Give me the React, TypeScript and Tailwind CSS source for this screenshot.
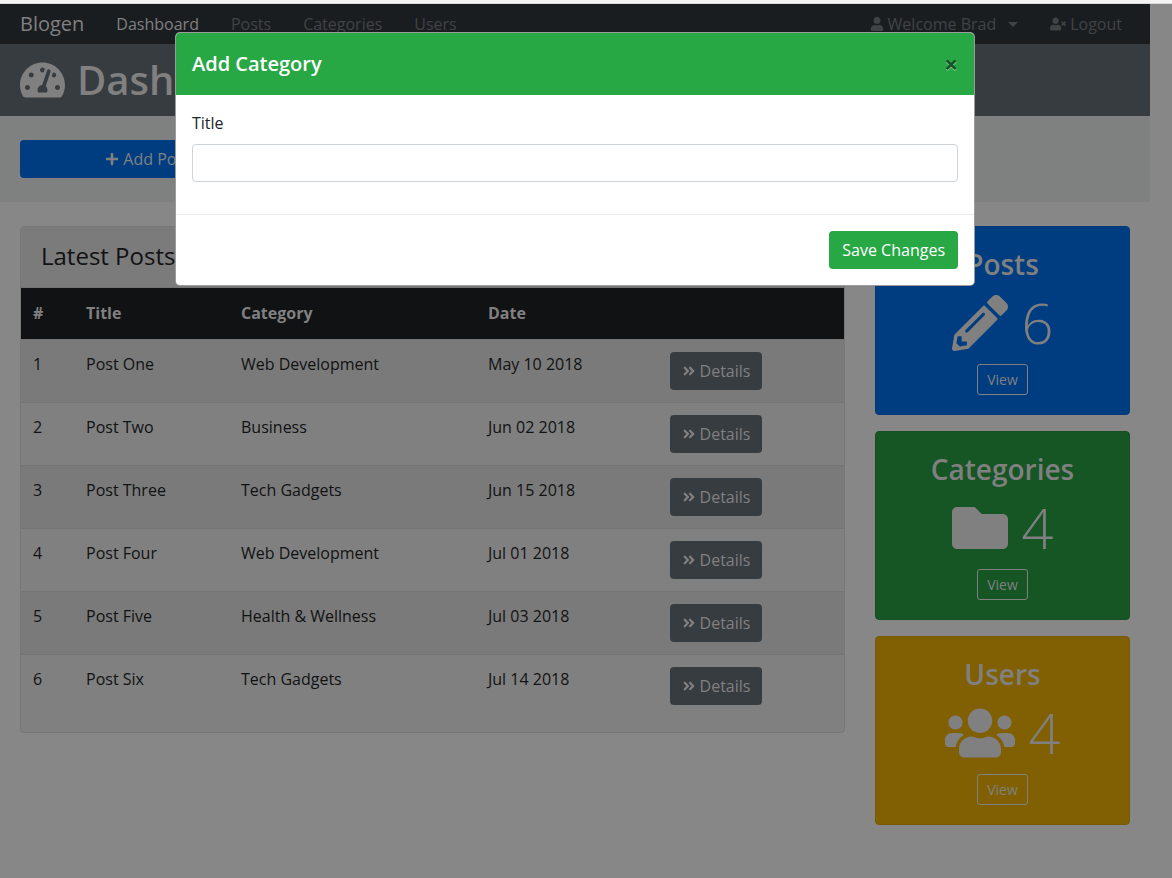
import { FaTachometerAlt, FaUser, FaUserTimes, FaPlus, FaPencilAlt, FaFolder, FaUsers, FaAngleDoubleRight } from "react-icons/fa";

const posts = [
  ["1", "Post One", "Web Development", "May 10 2018"],
  ["2", "Post Two", "Business", "Jun 02 2018"],
  ["3", "Post Three", "Tech Gadgets", "Jun 15 2018"],
  ["4", "Post Four", "Web Development", "Jul 01 2018"],
  ["5", "Post Five", "Health & Wellness", "Jul 03 2018"],
  ["6", "Post Six", "Tech Gadgets", "Jul 14 2018"],
];

function StatCard({ title, count, bg, border, children }: { title: string; count: string; bg: string; border: string; children: React.ReactNode }) {
  return (
    <div className={`h-[189px] rounded-[4px] border ${bg} ${border} p-5 text-center text-[#808080]`}>
      <h3 className="mb-2 text-[28px] leading-[34px] font-semibold">{title}</h3>
      <div className="mb-2 flex h-[67px] items-center justify-center gap-[14px] text-[56px] leading-[67px] font-light">
        {children}
        <span>{count}</span>
      </div>
      <a className="inline-block h-[31px] rounded-[3px] border border-[#808080] px-[9px] text-sm leading-[29px]">View</a>
    </div>
  );
}

export default function App() {
  return (
    <div className="relative min-h-[878px] overflow-hidden bg-[#878787] font-['Open_Sans','Liberation_Sans',sans-serif] text-base text-[#111213]">
      <div className="h-1 border-b border-[#d8d8d8] bg-[#f4f4f4]" />

      <div className="w-[1150px]">
        <nav className="flex h-10 items-center bg-[#1a1d20] px-5 text-[#808080]">
          <span className="mr-4 text-xl">Blogen</span>
          <a className="px-4 text-[#808080]">Dashboard</a>
          <a className="px-4 text-[#404346]">Posts</a>
          <a className="px-4 text-[#404346]">Categories</a>
          <a className="px-4 text-[#404346]">Users</a>
          <div className="ml-auto flex items-center text-[#404346]">
            <a className="flex items-center gap-1 px-2">
              <FaUser className="size-[14px]" />
              Welcome Brad
              <span className="ml-2 border-x-[5px] border-t-[5px] border-x-transparent border-t-[#404346]" />
            </a>
            <a className="ml-4 flex items-center gap-1 px-2">
              <FaUserTimes className="size-4" />
              Logout
            </a>
          </div>
        </nav>

        <header className="flex h-[72px] items-center gap-3 bg-[#373c40] px-5 text-[#808080]">
          <FaTachometerAlt className="h-10 w-[45px]" />
          <h1 className="text-[40px] leading-[48px] font-semibold">Dashboard</h1>
        </header>

        <section className="grid h-[86px] grid-cols-3 items-center gap-[30px] bg-[#7f8180] px-5">
          <a className="flex h-[38px] w-[255px] items-center justify-center gap-1 rounded-[4px] bg-[#003d80] text-[#808080]">
            <FaPlus className="size-[14px]" /> Add Post
          </a>
        </section>

        <main className="flex items-start gap-[30px] px-5 pt-6">
          <div className="h-[507px] w-[825px] rounded-[4px] border border-[#777777] bg-[#808080]">
            <div className="h-[61px] border-b border-[#747474] bg-[#7b7b7b] px-5 pt-[12px]">
              <h4 className="text-2xl leading-[33px] font-medium">Latest Posts</h4>
            </div>
            <table className="w-full table-fixed border-collapse text-left">
              <colgroup>
                <col className="w-[53px]" />
                <col className="w-[155px]" />
                <col className="w-[247px]" />
                <col className="w-[182px]" />
                <col />
              </colgroup>
              <thead className="bg-[#101214] text-[#808080]">
                <tr className="h-[51px]">
                  <th className="px-3 font-bold">#</th>
                  <th className="px-3 font-bold">Title</th>
                  <th className="px-3 font-bold">Category</th>
                  <th className="px-3 font-bold">Date</th>
                  <th />
                </tr>
              </thead>
              <tbody>
                {posts.map((p, i) => (
                  <tr key={p[0]} className={`h-[63px] border-t border-[#747474] align-top ${i % 2 === 0 ? "bg-[#7a7a7a]" : "bg-[#808080]"}`}>
                    <td className="px-3 pt-3">{p[0]}</td>
                    <td className="px-3 pt-3">{p[1]}</td>
                    <td className="px-3 pt-3">{p[2]}</td>
                    <td className="px-3 pt-3">{p[3]}</td>
                    <td className="px-3 pt-3">
                      <a className="flex h-[38px] w-[92px] items-center justify-center gap-1 rounded-[4px] bg-[#373c40] text-[#808080]">
                        <FaAngleDoubleRight className="size-[14px]" /> Details
                      </a>
                    </td>
                  </tr>
                ))}
              </tbody>
            </table>
          </div>

          <aside className="flex w-[255px] flex-col gap-4">
            <StatCard title="Posts" count="6" bg="bg-[#003d80]" border="border-[#003a78]">
              <FaPencilAlt className="size-14" />
            </StatCard>
            <StatCard title="Categories" count="4" bg="bg-[#165524]" border="border-[#145023]">
              <FaFolder className="size-14" />
            </StatCard>
            <StatCard title="Users" count="4" bg="bg-[#806003]" border="border-[#785a03]">
              <FaUsers className="h-14 w-[70px]" />
            </StatCard>
          </aside>
        </main>
      </div>

      <div className="absolute top-[32px] left-[175px] w-[800px] overflow-hidden rounded-[5px] border border-[#5a5a5a]/60 bg-white">
        <div className="flex h-[62px] items-center justify-between bg-[#28a745] px-4">
          <h5 className="text-xl leading-[30px] font-semibold text-white">Add Category</h5>
          <button className="text-2xl leading-none font-bold text-[#14532a] [text-shadow:0_1px_0_#8fd3a0]">×</button>
        </div>
        <div className="h-[119px] p-4 text-[#212529]">
          <label className="mb-[9px] block leading-6">Title</label>
          <input className="block h-[38px] w-full rounded-[4px] border border-[#ced4da] bg-white" />
        </div>
        <div className="flex h-[71px] justify-end border-t border-[#e9ecef] px-4 pt-4">
          <button className="h-[38px] rounded-[4px] bg-[#28a745] px-[13px] text-white">Save Changes</button>
        </div>
      </div>
    </div>
  );
}
